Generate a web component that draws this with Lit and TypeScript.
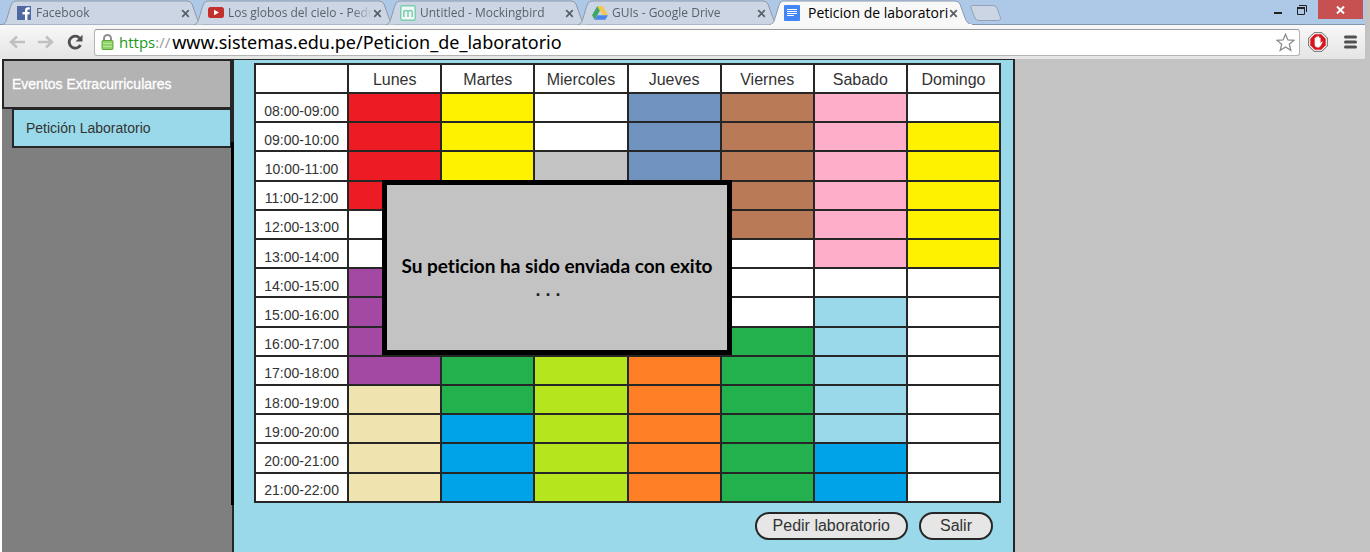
import { LitElement, html, svg, css, TemplateResult } from "lit";
import { customElement, property } from "lit/decorators.js";
import { classMap } from "lit/directives/class-map.js";

const closeIcon = html`<svg width="9" height="9" viewBox="0 0 9 9" aria-hidden="true">
  <path d="M1.200 1.200 7.800 7.800M7.800 1.200 1.200 7.800" stroke="#5c6168" stroke-width="1.800" fill="none" />
</svg>`;

const icons: Record<string, TemplateResult> = {
  facebook: svg`<rect x="1" y="1" width="14" height="14" fill="#4e69a2"/><path d="M9 15V9.500H6.500V7H9V5.500c0-2.100 1.200-3.200 3.200-3.200h1.600v2.300h-1.200c-.9 0-1.200.4-1.200 1.200V7h2.300l-.3 2.500h-2V15z" fill="#fff"/>`,
  youtube: svg`<rect x="0" y="2" width="16" height="11" rx="2.500" fill="#c4302b"/><path d="M6 4.800v5.400L11 7.500z" fill="#fff"/>`,
  mocking: svg`<rect x=".75" y=".75" width="14.500" height="14.500" rx="1.500" fill="#eef7f4" stroke="#7fcdb0" stroke-width="1.500"/><path d="M3.800 12V5.500M3.800 7.500C4 6 5.200 5.500 6.200 5.500S8 6.200 8 7.500V12M8 7.500C8.200 6 9.400 5.500 10.400 5.500S12.200 6.200 12.200 7.500V12" stroke="#7fcdb0" stroke-width="1.500" fill="none"/>`,
  drive: svg`<path d="M5.300 1 0 10.200l2.700 4.600L8 5.600z" fill="#3fa66b"/><path d="M5.300 1h5.400l5.300 9.200h-5.400z" fill="#f2c94c"/><path d="M5.400 10.200H16l-2.700 4.600H2.700z" fill="#4a86e8"/>`,
  docs: svg`<rect width="16" height="16" rx="1" fill="#4285f4"/><path d="M3 4.500h10M3 6.500h10M3 8.500h10M3 10.500h7" stroke="#fff" stroke-width="1"/>`,
};

@customElement("browser-tab")
class BrowserTab extends LitElement {
  @property() label = "";
  @property() icon = "docs";
  @property({ type: Boolean }) active = false;

  static styles = css`
    :host { display: block; width: 204px; height: 25px; margin-right: -12px; flex: none; }
    .row { position: relative; isolation: isolate; display: flex; align-items: center; height: 25px; padding: 1px 16px 0 14px; box-sizing: border-box; }
    .shape { position: absolute; inset: 0; z-index: -1; width: 100%; height: 100%; }
    .icon { flex: none; width: 16px; height: 16px; }
    button { border: 0; padding: 0; background: none; font: inherit; color: inherit; }
    .title { flex: 1; min-width: 0; margin: 0 0 0 4px; text-align: left; overflow: hidden; white-space: nowrap;
      font: 12px/20px "Open Sans", "Noto Sans", sans-serif; color: #5a616b;
      -webkit-mask-image: linear-gradient(90deg, #000 86%, transparent); mask-image: linear-gradient(90deg, #000 86%, transparent); }
    .active .title { font-size: 14px; color: #000; margin: 0 0 0 8px; overflow: visible; -webkit-mask-image: none; mask-image: none; }
    .close { display: flex; flex: none; }
  `;

  render() {
    return html`<div class=${classMap({ row: true, active: this.active })}>
      <svg class="shape" viewBox="0 0 204 25" aria-hidden="true">
        <path d="M0 24.500C4 24 4 21 6 15L9 5Q10.500 1 13 1H185Q188.500 1 190 4L195 18Q197.500 24.500 202 24.500"
          fill=${this.active ? "#f8f8f8" : "#cbd5e3"} stroke="#8d9aac" />
        ${this.active ? svg`<rect x="1" y="24" width="201" height="1" fill="#f8f8f8"/>` : ""}
      </svg>
      <svg class="icon" viewBox="0 0 16 16" aria-hidden="true">${icons[this.icon]}</svg>
      <button class="title">${this.label}</button>
      <button class="close" aria-label="Cerrar">${closeIcon}</button>
    </div>`;
  }
}

@customElement("browser-bar")
class BrowserBar extends LitElement {
  static styles = css`
    :host { display: block; margin-right: 5px; }
    button { border: 0; padding: 0; background: none; display: flex; align-items: center; justify-content: center; }
    .strip { display: flex; height: 25px; background: #aec9e8; padding-left: 2px; box-shadow: inset 0 -1px #8496ac; }
    .new { align-self: flex-start; margin: 5px 0 0 8px; }
    .window { display: flex; margin-left: auto; margin-right: 2px; height: 19px; }
    .min, .max { width: 24px; }
    .shut { width: 45px; background: #c75050; margin-left: 4px; }
    .tools { display: flex; align-items: center; height: 34px; padding: 0 8px; box-sizing: border-box;
      background: linear-gradient(#f8f8f8, #e4e4e4); }
    .nav { display: flex; gap: 11px; margin-right: 10px; }
    .box { flex: 1; min-width: 0; display: flex; align-items: center; height: 27px; box-sizing: border-box;
      border: 1px solid #b4b4b4; border-top-color: #999; border-radius: 3px; background: #fff; padding: 0 4px 0 6px; }
    .scheme { margin: 0 2px 0 5px; font: 15px/24px "Open Sans", "Noto Sans", sans-serif; color: #999; }
    .secure { color: #1a9a1a; }
    .url { flex: 1; min-width: 0; border: 0; padding: 0; outline: 0; background: none; color: #000;
      font: 18px/24px "Noto Sans", "Open Sans", sans-serif; }
    .right { display: flex; gap: 16px; margin-left: 8px; }
  `;

  render() {
    return html`
      <nav class="strip">
        <browser-tab label="Facebook" icon="facebook"></browser-tab>
        <browser-tab label="Los globos del cielo - Pedr" icon="youtube"></browser-tab>
        <browser-tab label="Untitled - Mockingbird" icon="mocking"></browser-tab>
        <browser-tab label="GUIs - Google Drive" icon="drive"></browser-tab>
        <browser-tab label="Peticion de laboratori" icon="docs" active></browser-tab>
        <button class="new" aria-label="Nueva pestaña">
          <svg width="32" height="16" viewBox="0 0 32 16"><path d="M2.500.5H23q3 0 4 2.500l3.500 9.500q.5 3-2 3H9q-3 0-4-2.500L1 3Q.5.5 2.500.5z" fill="#cbd5e3" stroke="#93a2b6"/></svg>
        </button>
        <div class="window">
          <button class="min" aria-label="Minimizar"><svg width="10" height="12"><path d="M1 9h8" stroke="#222" stroke-width="2"/></svg></button>
          <button class="max" aria-label="Restaurar"><svg width="12" height="12" viewBox="0 0 12 12" fill="none" stroke="#222"><path d="M1.500 4v6.500h7V4M3 1.500h7.500V8"/><path d="M1 4h8" stroke-width="2"/></svg></button>
          <button class="shut" aria-label="Cerrar ventana"><svg width="9" height="8" viewBox="0 0 9 8"><path d="M1 .5 8 7.500M8 .5 1 7.500" stroke="#fff" stroke-width="2"/></svg></button>
        </div>
      </nav>
      <div class="tools">
        <div class="nav">
          <button aria-label="Atrás"><svg width="18" height="16" viewBox="0 0 18 16"><path d="M17 8H4M9 2.500 3 8l6 5.500" stroke="#c0c0c0" stroke-width="2.500" fill="none"/></svg></button>
          <button aria-label="Adelante"><svg width="18" height="16" viewBox="0 0 18 16"><path d="M1 8h13M9 2.500 15 8l-6 5.500" stroke="#c0c0c0" stroke-width="2.500" fill="none"/></svg></button>
          <button aria-label="Recargar"><svg width="18" height="16" viewBox="0 0 18 16"><path d="M14.500 11A6 6 0 1 1 13.500 4" stroke="#505050" stroke-width="2.800" fill="none"/><path d="M16.500.8v6.700H9.500z" fill="#505050"/></svg></button>
        </div>
        <div class="box">
          <svg width="13" height="16" viewBox="0 0 13 16" aria-hidden="true"><path d="M3 8V4.500a3.500 3.500 0 0 1 7 0V8" stroke="#8f8f8f" stroke-width="2" fill="none"/><rect x="1" y="6.500" width="11" height="9" rx="1" fill="#8fd268" stroke="#5da63c"/><path d="M2 9.500h9M2 12.500h9" stroke="#b4e598"/></svg>
          <span class="scheme"><span class="secure">https</span>://</span>
          <input class="url" aria-label="Dirección" value="www.sistemas.edu.pe/Peticion_de_laboratorio" />
          <svg width="19" height="19" viewBox="0 0 19 19" aria-hidden="true"><path d="M9.500 1.300 11.900 7l6 .4-4.600 3.900 1.500 6-5.300-3.300-5.300 3.300 1.500-6L1.100 7.400l6-.4z" fill="#fff" stroke="#8a8a8a" stroke-width="1.300"/></svg>
        </div>
        <div class="right">
          <button aria-label="Bloqueador"><svg width="20" height="20" viewBox="0 0 20 20"><path d="M6 .7h8L19.300 6v8L14 19.300H6L.7 14V6z" fill="#fff" stroke="#666"/><path d="M6.700 2.300h6.600l4.400 4.400v6.600l-4.400 4.400H6.700l-4.400-4.400V6.700z" fill="#d9141c"/><path d="M6.700 9V6q.8-1 1.400 0V5q.8-1.200 1.500 0V4.500q.9-1 1.500 0V6q.9-1 1.500 0v5l1-1.300q1.200-.6 1 .5L12.500 14q-.6 1.500-2.600 1.500-3 0-3.200-3z" fill="#fff" stroke="#b99" stroke-width=".3"/></svg></button>
          <button aria-label="Menú"><svg width="13" height="14" viewBox="0 0 13 14"><path d="M1.500 2h10M1.500 7h10M1.500 12h10" stroke="#505050" stroke-width="3" stroke-linecap="round"/></svg></button>
        </div>
      </div>`;
  }
}

const hours = Array.from({ length: 14 }, (_, i) => {
  const pad = (n: number) => String(n).padStart(2, "0");
  return `${pad(8 + i)}:00-${pad(9 + i)}:00`;
});

/* One letter per hour: the colour of the group that holds the laboratory. */
const days: [string, string][] = [
  ["Lunes", "rrrrwwppppeeee"],
  ["Martes", "yyyywwwwwggbbb"],
  ["Miercoles", "wwswwwwwwlllll"],
  ["Jueves", "nnnnwwwwwooooo"],
  ["Viernes", "tttttwwwgggggg"],
  ["Sabado", "kkkkkkwcccccbb"],
  ["Domingo", "wyyyyywwwwwwww"],
];

@customElement("lab-schedule")
class LabSchedule extends LitElement {
  static styles = css`
    :host { display: block; font-family: "Liberation Sans", Arial, sans-serif; color: #333; }
    table { width: 100%; height: 440px; border-collapse: collapse; table-layout: fixed; background: #fff; border: 2px solid #262626; }
    tr { height: 29px; }
    th, td { border: 2px solid #262626; padding: 0; font-weight: 400; text-align: center; }
    thead th { font-size: 16px; line-height: 18px; padding-top: 2px; }
    tbody th { font-size: 14px; line-height: 16px; padding-top: 6px; }
    .r { background: #ed1c24; } .y { background: #fff200; } .s { background: #c3c3c3; }
    .n { background: #7092be; } .t { background: #b97a57; } .k { background: #ffaec9; }
    .p { background: #a349a4; } .e { background: #efe4b0; } .g { background: #22b14c; }
    .l { background: #b5e61d; } .o { background: #ff7f27; } .b { background: #00a2e8; }
    .c { background: #99d9ea; } .w { background: #fff; }
  `;

  render() {
    return html`<table>
      <thead><tr><td></td>${days.map(([name]) => html`<th scope="col">${name}</th>`)}</tr></thead>
      <tbody>
        ${hours.map((hour, i) => html`<tr>
          <th scope="row">${hour}</th>
          ${days.map(([, slots]) => html`<td class=${slots[i]}></td>`)}
        </tr>`)}
      </tbody>
    </table>`;
  }
}

@customElement("app-root")
class AppRoot extends LitElement {
  static styles = css`
    :host { display: flex; flex-direction: column; min-height: 100vh; background: #c3c3c3; overflow: hidden;
      font-family: "Liberation Sans", Arial, sans-serif; }
    .page { flex: 1; display: flex; }
    .side { position: relative; flex: none; width: 234px; box-sizing: border-box; background: #7f7f7f; border-left: 2px solid #fff; border-right: 2px solid #262626; }
    .side::after { content: ""; position: absolute; right: -2px; top: 83px; width: 3px; height: 363px; background: #000; }
    .side a { display: block; box-sizing: border-box; text-decoration: none; font-size: 14px; line-height: 16px; border: 2px solid #262626; }
    .group { background: #b3b3b3; color: #fff; padding: 15px 8px; -webkit-text-stroke: 0.3px #fff; }
    .item { background: #99d9ea; color: #333; padding: 10px 12px; margin: -1px 0 0 10px; }
    .panel { flex: 0 1 781px; box-sizing: border-box; background: #99d9ea; border-top: 1px solid #262626; border-right: 2px solid #262626; padding: 3px 12px 12px 20px; }
    .lab { position: relative; }
    .notice { position: absolute; left: 128px; top: 117px; width: 350px; height: 175px; box-sizing: border-box;
      border: 5px solid #000; background: #c3c3c3; color: #000; display: flex; flex-direction: column; align-items: center; justify-content: center;
      padding-top: 20px; text-align: center; white-space: nowrap; }
    .notice p { margin: 0; font: 700 19px/24px "Lato", "Open Sans", sans-serif; font-variant-ligatures: none; }
    .notice .dots { padding-right: 18px; font: 700 18px/24px "Liberation Sans", Arial, sans-serif; color: #262626; }
    .actions { display: flex; justify-content: flex-end; gap: 11px; margin: 9px 8px 0 0; }
    .actions button { height: 28px; border: 2px solid #262626; border-radius: 14px; background: #e6e6e6; color: #333;
      padding: 0 16px; font: 16px/20px "Liberation Sans", Arial, sans-serif; }
    .actions .exit { padding: 0 19px; }
    .sheet { width: 747px; max-width: 100%; }
  `;

  render() {
    return html`
      <browser-bar></browser-bar>
      <div class="page">
        <nav class="side">
          <a class="group" href="#eventos">Eventos Extracurriculares</a>
          <a class="item" href="#peticion">Petición Laboratorio</a>
        </nav>
        <main class="panel">
          <div class="sheet">
            <div class="lab">
              <lab-schedule></lab-schedule>
              <div class="notice" role="alertdialog" aria-label="Petición enviada">
                <p>Su peticion ha sido enviada con exito</p>
                <p class="dots">. . .</p>
              </div>
            </div>
            <div class="actions">
              <button>Pedir laboratorio</button>
              <button class="exit">Salir</button>
            </div>
          </div>
        </main>
      </div>`;
  }
}
